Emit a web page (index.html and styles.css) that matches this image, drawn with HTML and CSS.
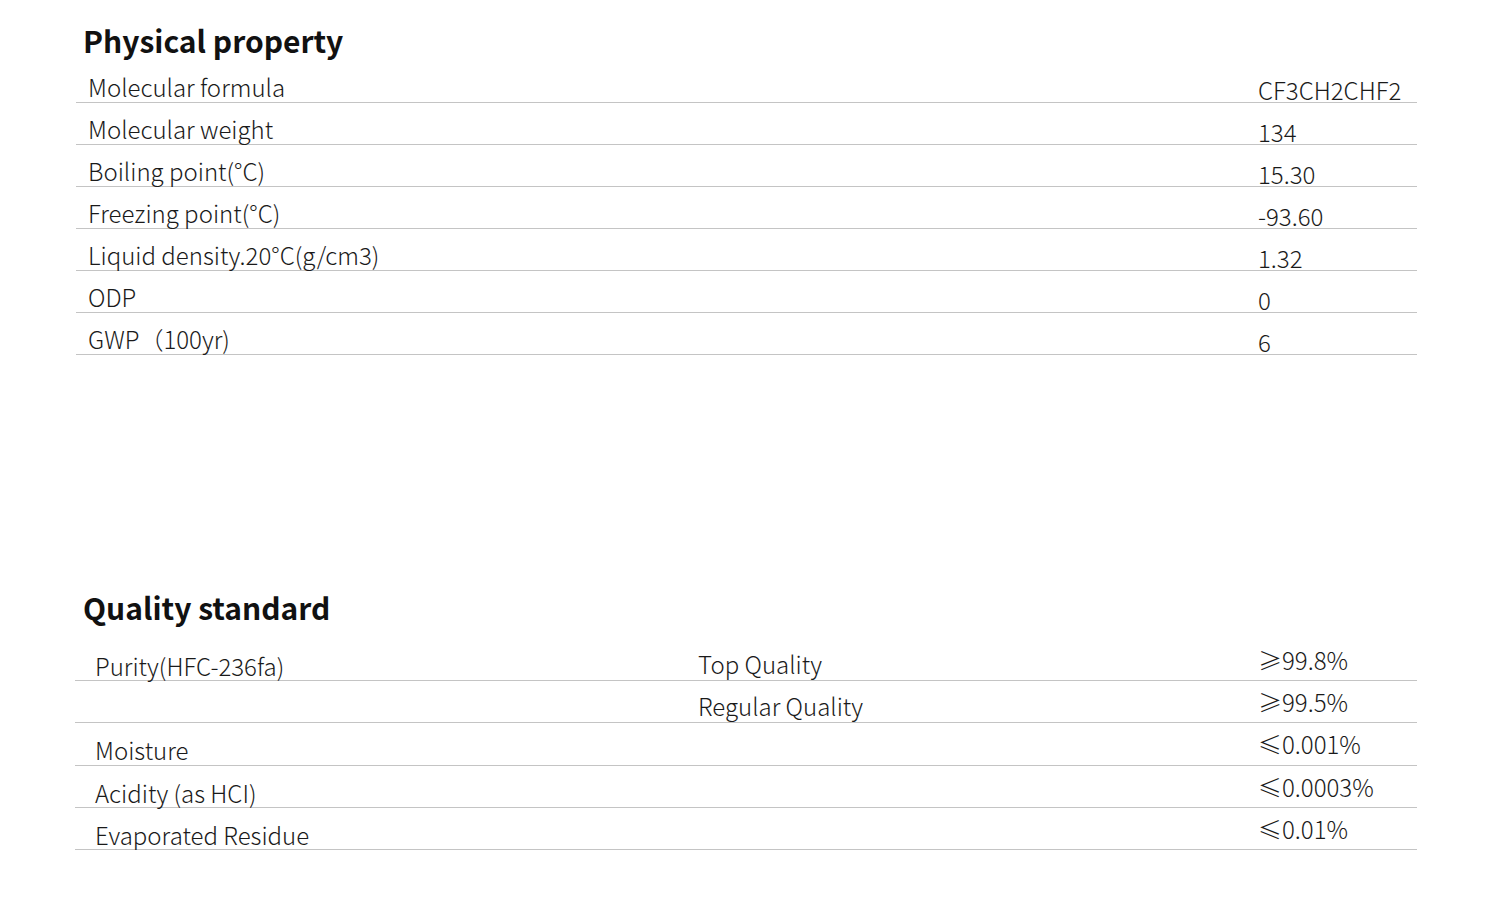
FILE: index.html
```html
<!DOCTYPE html>
<html lang="en">
<head>
<meta charset="utf-8">
<title>HFC-236fa</title>
<link rel="stylesheet" href="styles.css">
</head>
<body>
<main class="page">
  <section class="block block-physical">
    <h2 class="title">Physical property</h2>
    <div class="table t1">
      <div class="row"><span class="label">Molecular formula</span><span class="value">CF3CH2CHF2</span></div>
      <div class="row"><span class="label">Molecular weight</span><span class="value">134</span></div>
      <div class="row"><span class="label">Boiling point(°C)</span><span class="value">15.30</span></div>
      <div class="row"><span class="label">Freezing point(°C)</span><span class="value">-93.60</span></div>
      <div class="row"><span class="label">Liquid density.20°C(g/cm3)</span><span class="value">1.32</span></div>
      <div class="row"><span class="label">ODP</span><span class="value">0</span></div>
      <div class="row"><span class="label">GWP（100yr)</span><span class="value">6</span></div>
    </div>
  </section>
  <section class="block block-quality">
    <h2 class="title">Quality standard</h2>
    <div class="table t2">
      <div class="row"><span class="label">Purity(HFC-236fa)</span><span class="grade">Top Quality</span><span class="value">≥99.8%</span></div>
      <div class="row"><span class="label"></span><span class="grade">Regular Quality</span><span class="value">≥99.5%</span></div>
      <div class="row tall"><span class="label">Moisture</span><span class="grade"></span><span class="value">≤0.001%</span></div>
      <div class="row"><span class="label">Acidity (as HCI)</span><span class="grade"></span><span class="value">≤0.0003%</span></div>
      <div class="row"><span class="label">Evaporated Residue</span><span class="grade"></span><span class="value">≤0.01%</span></div>
    </div>
  </section>
</main>
</body>
</html>
```

FILE: styles.css
```css
* { box-sizing: border-box; }
html, body { margin: 0; padding: 0; background: #fff; }
body {
  font-family: "Noto Sans CJK SC Light", "Noto Sans CJK SC", "Noto Sans", "DejaVu Sans", sans-serif;
  color: #1a1a1a;
}
.page {
  width: 1500px;
  padding: 20px 0 0 0;
}
.title {
  margin: 0 0 0 83px;
  font-family: "Noto Sans CJK SC", "Noto Sans", sans-serif;
  font-size: 30px;
  line-height: 40px;
  font-weight: 700;
  color: #111;
  height: 41px;
}
.block-quality { margin-top: 233px; }
.block-quality .title { height: 52px; margin-top: -1px; }

.table { display: flex; flex-direction: column; }
.t1 { margin-left: 76px; width: 1341px; }
.t2 { margin-left: 75px; width: 1342px; }

.row {
  display: grid;
  height: 42px;
  border-bottom: 1px solid #c4c4c4;
  font-size: 24px;
  line-height: 30px;
  font-weight: 300;
  white-space: nowrap;
}
.t1 .row { grid-template-columns: 1182px 1fr; }
.t2 .row { grid-template-columns: 623px 560px 1fr; }
.t2 .row.tall { height: 43px; }

.t1 .label { padding: 11px 0 0 12px; }
.t1 .value { padding: 14px 0 0 0; }
.t2 .label { padding: 12px 0 0 20px; }
.t2 .grade { padding: 10px 0 0 0; }
.t2 .value { padding: 6px 0 0 0; }
```
